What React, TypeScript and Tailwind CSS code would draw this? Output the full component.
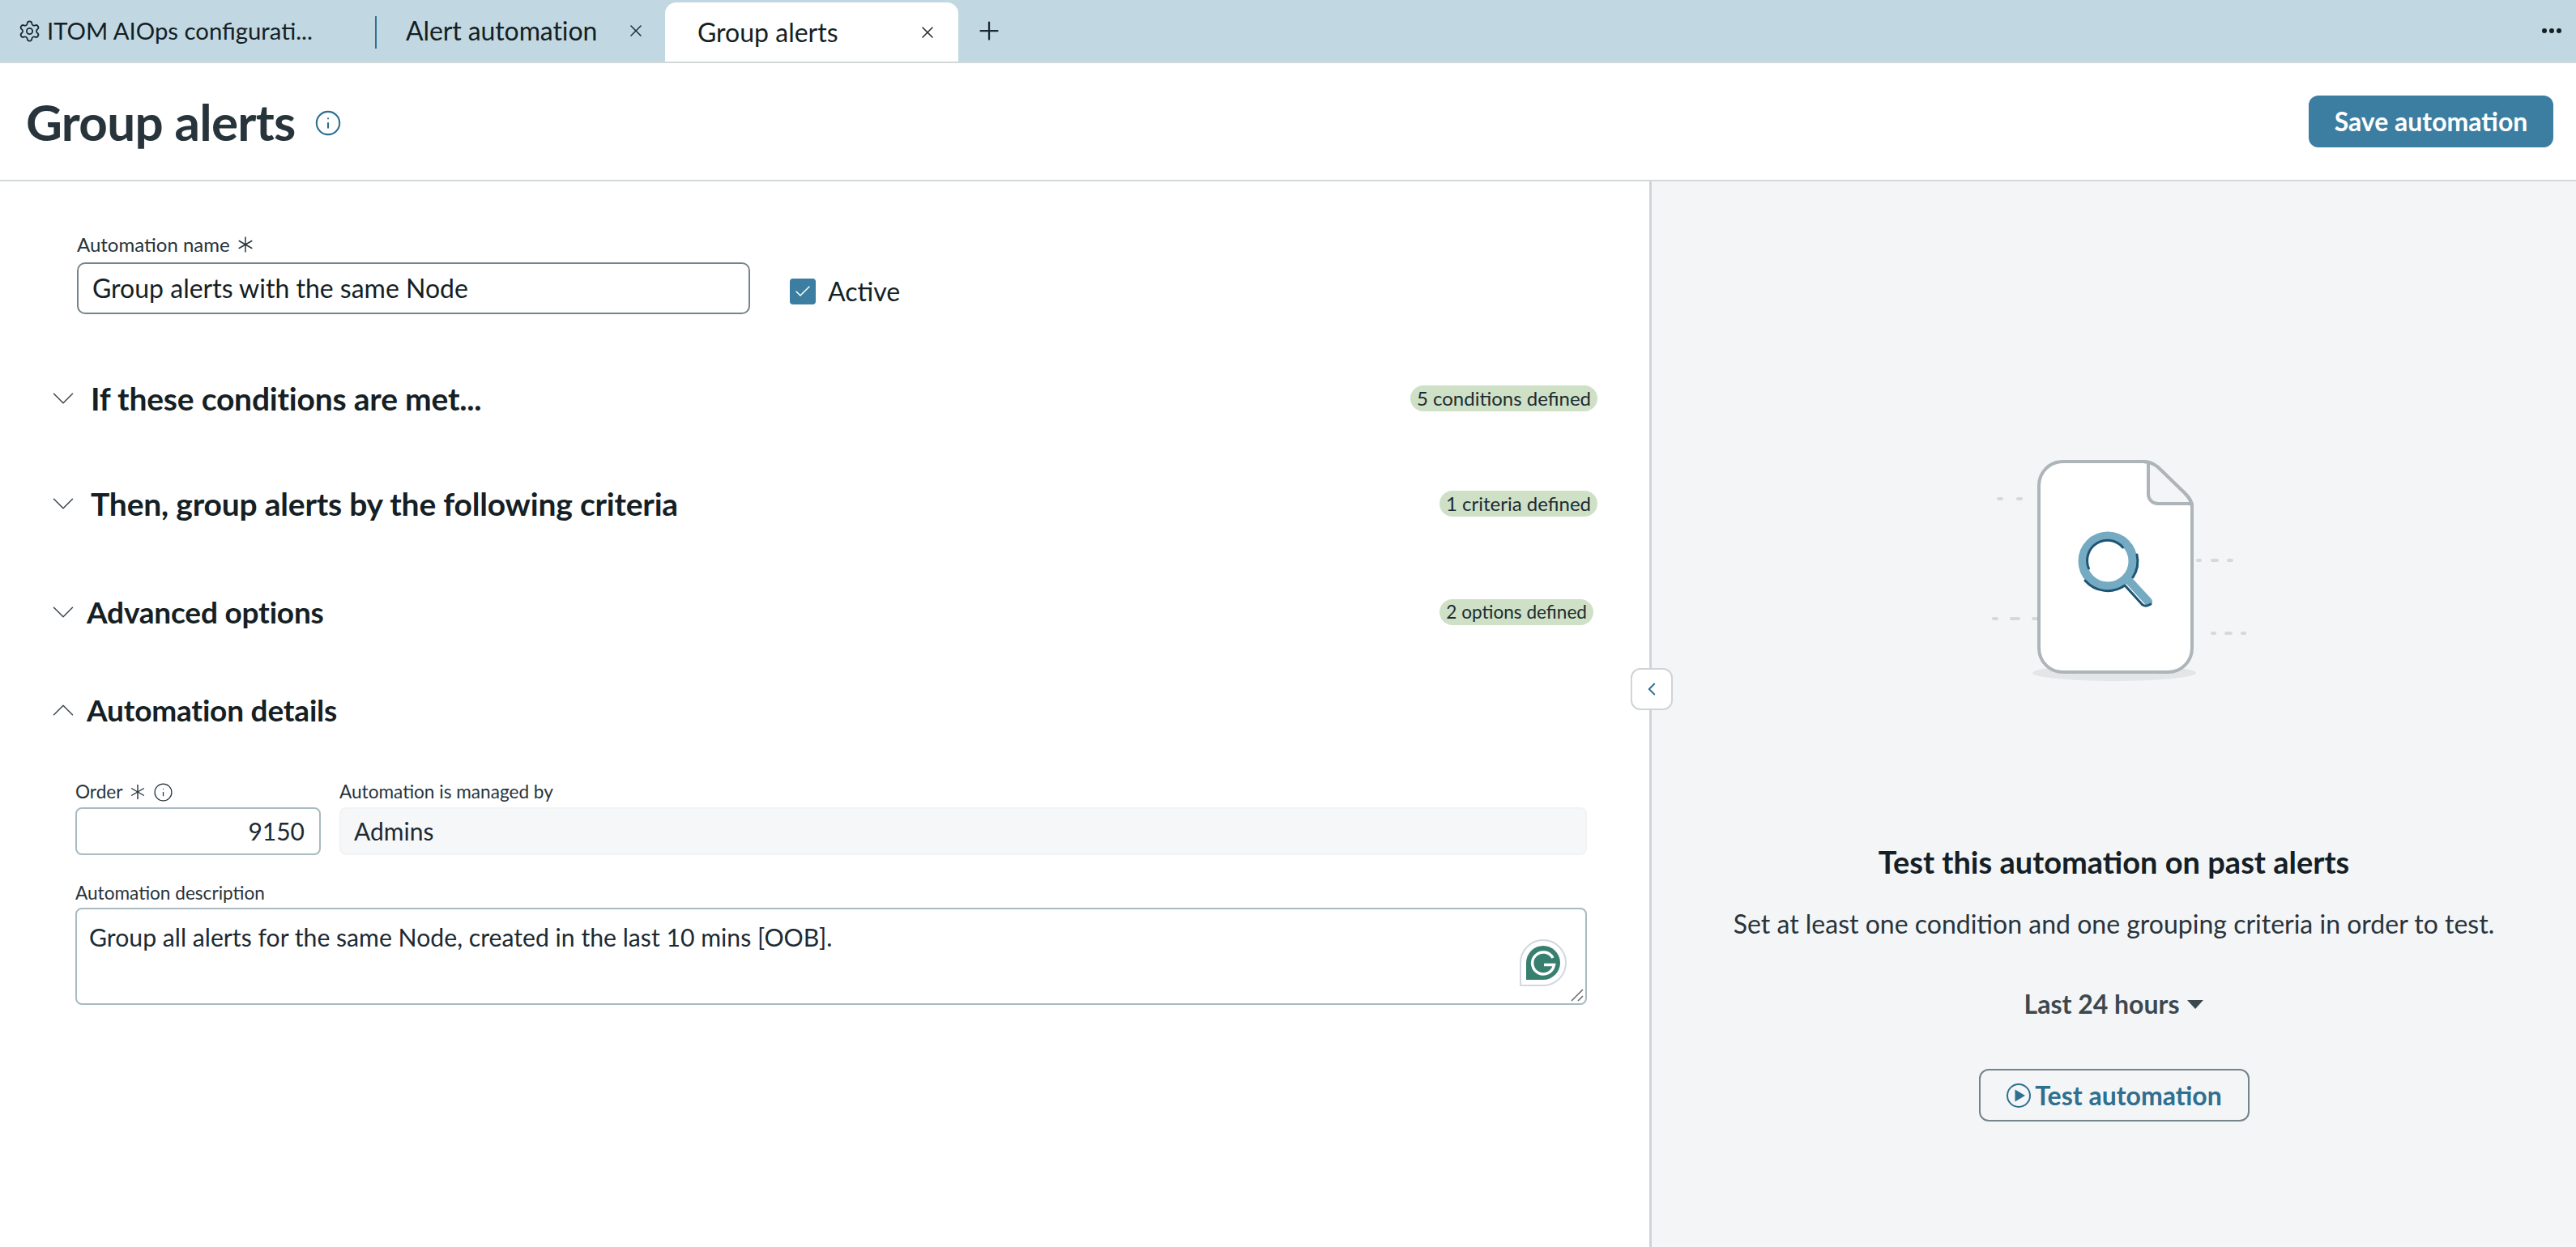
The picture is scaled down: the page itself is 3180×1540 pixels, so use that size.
import { Asterisk, Check, ChevronDown, ChevronLeft, ChevronUp, Info, Plus, Settings, X } from "lucide-react"

function Illustration() {
  return (
    <svg width="400" height="290" viewBox="0 0 400 290" fill="none" className="block shrink-0">
      <ellipse cx="200" cy="271" rx="101" ry="10" fill="#e3e5e7" />
      <g stroke="#d4d9db" strokeWidth="4" strokeLinecap="round">
        <path d="M57 56h4M81 56h4M303 132h3M321 132h6M341 132h4M51 204h4M73 204h9M100 204h5M321 222h3M338 222h6M358 222h3" />
      </g>
      <path
        d="M137 10h99c7 0 13 3 18 7l32 31c6 6 10 11 10 18v174c0 17-13 30-30 30H137c-17 0-30-13-30-30V40c0-17 13-30 30-30z"
        fill="#fff"
        stroke="#adb5b9"
        strokeWidth="4"
      />
      <path d="M236 10c7 0 13 3 18 7l32 31c6 6 10 11 10 14h-42c-7 0-12-5-12-12V12z" fill="#f4f5f7" />
      <path d="M242 12v38c0 7 5 12 12 12h42" stroke="#adb5b9" strokeWidth="4" />
      <path d="M236 10c7 0 13 3 18 7l32 31c6 6 10 11 10 18" stroke="#adb5b9" strokeWidth="4" />
      <circle cx="192" cy="133" r="31" stroke="#74abc3" strokeWidth="11" />
      <path d="M219 158l23 25" stroke="#74abc3" strokeWidth="10" strokeLinecap="round" />
      <g stroke="#1f5573" strokeWidth="3" strokeLinecap="round">
        <path d="M168.5 142A25 25 0 0 1 210.5 116" />
        <path d="M228 125A37 37 0 0 1 223 153" />
        <path d="M164 157A37 37 0 0 0 213 163" />
        <path d="M214 164l21 23c3 2 7 1 10-1" />
      </g>
    </svg>
  )
}

function GrammarlyBadge() {
  return (
    <svg width="58" height="58" viewBox="0 0 58 58" className="absolute right-[23px] bottom-[21px]">
      <path d="M1 57V29a28 28 0 1 1 28 28z" fill="#fff" stroke="#d3d7e2" strokeWidth="2" />
      <path d="M8 50V29a21 21 0 1 1 21 21z" fill="#377f6e" />
      <path d="M41 23a13.5 13.5 0 1 0 1.5 8.5H30" fill="none" stroke="#fff" strokeWidth="3.5" />
    </svg>
  )
}

function Section({
  title,
  chip,
  open,
  className,
  titleClass,
  chipClass
}: {
  title: string
  chip?: string
  open?: boolean
  className: string
  titleClass: string
  chipClass?: string
}) {
  const Icon = open ? ChevronUp : ChevronDown
  return (
    <div className={`flex items-center justify-between pl-[55px] ${className}`}>
      <div className="flex items-center">
        <Icon size={46} strokeWidth={0.8} className="text-[#3c4a52]" />
        <h2 className={`font-bold text-[#151f25] tracking-[-0.2px] leading-[56px] ${titleClass}`}>{title}</h2>
      </div>
      {chip && (
        <span className={`h-[32px] px-[8px] mb-[1px] rounded-full bg-[#cee0c6] leading-[32px] text-[#1c2b33] ${chipClass}`}>
          {chip}
        </span>
      )}
    </div>
  )
}

export default function App() {
  return (
    <div className="w-[3180px] h-[1540px] overflow-hidden bg-white font-['Lato',sans-serif] text-[#1c2b33] flex flex-col">
      {/* Tab bar */}
      <div className="h-[78px] shrink-0 bg-[#c1d8e2] border-b-2 border-[#d2d7da] flex items-end relative">
        <div className="w-[463px] h-[76px] flex items-center pl-[22px]">
          <Settings size={29} strokeWidth={1.5} className="mr-[7px] text-[#1c2b33]" />
          <span className="text-[29.3px] text-[#151f25]">ITOM AIOps configurati...</span>
        </div>
        <div className="w-[2px] h-[40px] bg-[#2f6f90] mb-[16px]" />
        <div className="w-[356px] h-[76px] flex items-center pl-[36px]">
          <span className="text-[32px] text-[#151f25] tracking-[-0.1px] w-[272px]">Alert automation</span>
          <X size={24} strokeWidth={1.5} className="text-[#1c2b33]" />
        </div>
        <div className="w-[362px] h-[73px] bg-white rounded-t-[14px] flex items-center pl-[40px]">
          <span className="text-[32px] text-[#151f25] w-[272px]">Group alerts</span>
          <X size={24} strokeWidth={1.5} className="text-[#1c2b33]" />
        </div>
        <div className="h-[76px] flex items-center ml-[20px]">
          <Plus size={36} strokeWidth={1.5} className="text-[#1c2b33]" />
        </div>
        <div className="ml-auto h-[76px] flex items-center gap-[3px] pr-[18px]">
          <span className="w-[6px] h-[6px] rounded-full bg-[#151f25]" />
          <span className="w-[6px] h-[6px] rounded-full bg-[#151f25]" />
          <span className="w-[6px] h-[6px] rounded-full bg-[#151f25]" />
        </div>
      </div>

      {/* Page header */}
      <div className="h-[146px] shrink-0 border-b-[2px] border-[#d2d7da] flex items-center pl-[32px] pr-[28px]">
        <h1 className="text-[62px] font-bold tracking-[-0.7px] text-[#28343b] leading-none">Group alerts</h1>
        <Info size={34} strokeWidth={1.5} className="ml-[23px] mt-[3px] text-[#2f6f90]" />
        <button className="ml-auto w-[302px] h-[64px] rounded-[12px] bg-[#3b7ea1] text-white text-[32px] font-bold">
          Save automation
        </button>
      </div>

      <div className="flex-1 flex min-h-0 relative">
        {/* Form side */}
        <div className="w-[2039px] shrink-0 border-r-[3px] border-[#cfd4d8] pt-[64px]">
          <div className="pl-[95px] flex items-end">
            <div>
              <label className="flex items-center text-[24px] text-[#28343b] h-[28px]">
                Automation name
                <Asterisk size={36} strokeWidth={1} className="ml-[1px]" />
              </label>
              <div className="mt-[8px] w-[831px] h-[64px] border-2 border-[#75848a] rounded-[10px] flex items-center px-[17px] text-[32px] text-[#151f25]">
                Group alerts with the same Node
              </div>
            </div>
            <div className="ml-[49px] mb-[4px] flex items-center">
              <span className="w-[32px] h-[32px] rounded-[4px] bg-[#3b7ea1] flex items-center justify-center">
                <Check size={24} strokeWidth={1.5} className="text-white" />
              </span>
              <span className="ml-[15px] text-[32px] text-[#151f25]">Active</span>
            </div>
          </div>

          <Section
            title="If these conditions are met..."
            chip="5 conditions defined"
            className="mt-[76px] pr-[64px]"
            titleClass="ml-[11px] text-[39px]"
            chipClass="text-[24px]"
          />
          <Section
            title="Then, group alerts by the following criteria"
            chip="1 criteria defined"
            className="mt-[74px] pr-[64px]"
            titleClass="ml-[11px] text-[39px]"
            chipClass="text-[24px]"
          />
          <Section
            title="Advanced options"
            chip="2 options defined"
            className="mt-[78px] pr-[69px]"
            titleClass="ml-[6px] text-[37px]"
            chipClass="text-[22.6px]"
          />
          <Section
            title="Automation details"
            open
            className="mt-[65px] pr-[64px]"
            titleClass="ml-[6px] text-[37px]"
          />

          <div className="mt-[59px] pl-[93px] pr-[77px]">
            <div className="flex gap-[23px]">
              <div className="w-[303px]">
                <label className="flex items-center text-[22.6px] text-[#28343b] h-[28px]">
                  Order
                  <Asterisk size={34} strokeWidth={1} className="ml-[2px]" />
                  <Info size={25} strokeWidth={1.2} className="ml-[2px]" />
                </label>
                <div className="mt-[5px] h-[59px] border-2 border-[#a8bac2] rounded-[8px] flex items-center justify-end px-[18px] text-[30px] text-[#1c2b33]">
                  9150
                </div>
              </div>
              <div className="flex-1">
                <label className="flex items-center text-[22.6px] text-[#28343b] h-[28px]">
                  Automation is managed by
                </label>
                <div className="mt-[5px] h-[59px] border-2 border-[#f2f3f5] bg-[#f6f7f9] rounded-[8px] flex items-center px-[16px] text-[30px] text-[#1c2b33]">
                  Admins
                </div>
              </div>
            </div>
            <label className="mt-[33px] flex items-center text-[22.6px] text-[#28343b] h-[28px]">
              Automation description
            </label>
            <div className="relative mt-[4px] h-[120px] border-2 border-[#a8bac2] rounded-[8px] pl-[15px] pt-[12px] text-[30.2px] text-[#1c2b33]">
              Group all alerts for the same Node, created in the last 10 mins [OOB].
              <GrammarlyBadge />
              <svg width="16" height="16" viewBox="0 0 16 16" className="absolute right-[2px] bottom-[2px]" stroke="#666" strokeWidth="1.5">
                <path d="M1 15L15 1M9 15l6-6" />
              </svg>
            </div>
          </div>
        </div>

        {/* Test side */}
        <div className="flex-1 bg-[#f4f5f7] flex flex-col items-center pt-[336px]">
          <Illustration />
          <h3 className="mt-[189px] text-[38px] font-bold text-[#151f25] leading-[50px]">
            Test this automation on past alerts
          </h3>
          <p className="mt-[30px] text-[32px] text-[#28343b] leading-[44px]">
            Set at least one condition and one grouping criteria in order to test.
          </p>
          <div className="mt-[55px] flex items-center text-[32px] font-bold text-[#3c4850] leading-[44px]">
            Last 24 hours
            <span className="ml-[10px] w-0 h-0 border-x-[10px] border-x-transparent border-t-[11px] border-t-[#3c4850]" />
          </div>
          <button className="mt-[58px] w-[334px] h-[65px] rounded-[12px] border-2 border-[#75848a] flex items-center justify-center text-[32px] font-bold text-[#2f6f90]">
            <svg width="32" height="32" viewBox="0 0 32 32" className="mr-[4px]" fill="none">
              <circle cx="16" cy="16" r="14" stroke="#2f6f90" strokeWidth="2" />
              <path d="M11.5 8.5v15L24 16z" fill="#2f6f90" />
            </svg>
            Test automation
          </button>
        </div>

        {/* Collapse handle */}
        <button className="absolute left-[2013px] top-[601px] w-[52px] h-[52px] rounded-[12px] border-2 border-[#cfd4d8] bg-white flex items-center justify-center">
          <ChevronLeft size={26} strokeWidth={1.75} className="text-[#2f6f90]" />
        </button>
      </div>
    </div>
  )
}
